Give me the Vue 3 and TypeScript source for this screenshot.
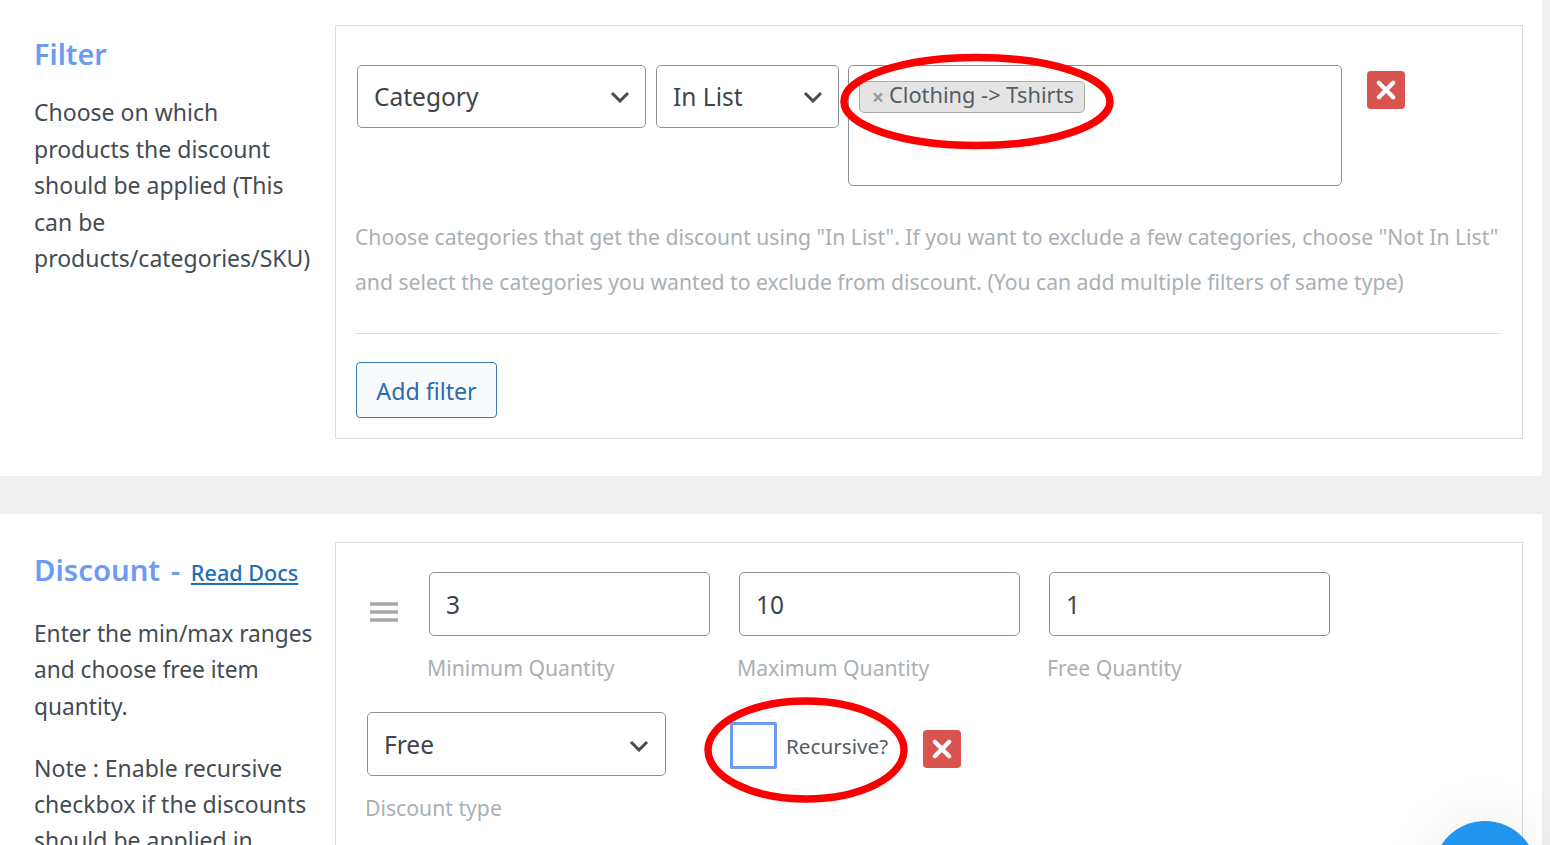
<script setup lang="ts">
const quantities = [
  { value: '3', label: 'Minimum Quantity' },
  { value: '10', label: 'Maximum Quantity' },
  { value: '1', label: 'Free Quantity' },
]
</script>

<template>
  <div class="page">
    <section class="panel filter-panel">
      <div class="intro">
        <h2>Filter</h2>
        <p>Choose on which products the discount should be applied (This can be products/categories/SKU)</p>
      </div>
      <div class="box filter-box">
        <div class="filter-row">
          <div class="select category"><span>Category</span><svg class="chev" viewBox="0 0 20 12"><path d="M2 2l8 8 8-8" /></svg></div>
          <div class="select inlist"><span>In List</span><svg class="chev" viewBox="0 0 20 12"><path d="M2 2l8 8 8-8" /></svg></div>
          <div class="multi">
            <span class="tag"><span class="tag-x">×</span>Clothing -&gt; Tshirts</span>
            <svg class="ring ring-tag" viewBox="0 0 274 96"><ellipse cx="137" cy="47.5" rx="133" ry="44" /></svg>
          </div>
          <button class="del del-top" type="button" aria-label="Remove"><svg viewBox="0 0 20 20"><path d="M4 4l12 12M16 4L4 16" /></svg></button>
        </div>
        <p class="hint">Choose categories that get the discount using "In List". If you want to exclude a few categories, choose "Not In List" and select the categories you wanted to exclude from discount. (You can add multiple filters of same type)</p>
        <hr />
        <button class="add" type="button">Add filter</button>
      </div>
    </section>

    <section class="panel discount-panel">
      <div class="intro">
        <h2>Discount <span class="dash">-</span> <a class="docs">Read Docs</a></h2>
        <p class="tight">Enter the min/max ranges and choose free item quantity.</p>
        <p class="tight note">Note : Enable recursive checkbox if the discounts should be applied in</p>
      </div>
      <div class="box discount-box">
        <div class="qty-row">
          <svg class="grip" viewBox="0 0 28 20"><path d="M0 2h28M0 10h28M0 18h28" /></svg>
          <div v-for="q in quantities" :key="q.label" class="field">
            <div class="input">{{ q.value }}</div>
            <div class="label">{{ q.label }}</div>
          </div>
        </div>
        <div class="type-row">
          <div class="field type-field">
            <div class="select free"><span>Free</span><svg class="chev" viewBox="0 0 20 12"><path d="M2 2l8 8 8-8" /></svg></div>
            <div class="label">Discount type</div>
          </div>
          <label class="recursive">
            <span class="check"></span>
            <span>Recursive?</span>
            <svg class="ring ring-rec" viewBox="0 0 204 106"><ellipse cx="102" cy="53" rx="98" ry="49" /></svg>
          </label>
          <button class="del del-bottom" type="button" aria-label="Remove"><svg viewBox="0 0 20 20"><path d="M4 4l12 12M16 4L4 16" /></svg></button>
        </div>
      </div>
    </section>
    <div class="bubble"></div>
  </div>
</template>

<style>
html, body { margin: 0; height: 845px; overflow: hidden; background: #f0f0f0; }
</style>

<style scoped>
.page {
  position: relative;
  width: 1550px;
  height: 845px;
  overflow: hidden;
  background: #f0f0f0;
  font-family: "Noto Sans", "Open Sans", sans-serif;
  color: #444b53;
}
.panel {
  width: 1542px;
  box-sizing: border-box;
  background: #fff;
  display: flex;
  align-items: flex-start;
  padding-left: 34px;
}
.filter-panel { height: 476px; padding-top: 25px; }
.discount-panel { height: 331px; margin-top: 38px; padding-top: 28px; }
.intro { width: 301px; flex: none; }
.intro h2 {
  margin: 0;
  font-size: 28.8px;
  line-height: 40px;
  font-weight: 600;
  color: #6d9bf2;
  white-space: nowrap;
}
.intro p {
  margin: 21px 0 0;
  width: 280px;
  font-size: 23px;
  line-height: 36.4px;
}
.filter-panel h2 { margin-top: 9px; }
.filter-panel .intro p { margin-top: 20.4px; width: 278px; }
.discount-panel h2 { margin-top: 7.5px; font-size: 29.3px; }
.intro p.tight { width: 290px; font-size: 22.7px; line-height: 36.4px; margin-top: 23.5px; }
.intro p.note { margin-top: 24.4px; font-size: 23px; line-height: 36.4px; }
.dash { margin: 0 3px; }
.docs {
  font-size: 21.6px;
  font-weight: 500;
  color: #1f6fb5;
  text-decoration: underline;
}
.box {
  width: 1188px;
  box-sizing: border-box;
  border: 1px solid #dcdcdc;
  background: #fff;
}
.filter-box { height: 414px; padding: 39px 20px 0 19px; }
.discount-box { height: 303px; padding: 29px 20px 0 31px; border-bottom: 0; }
.filter-row { display: flex; align-items: flex-start; margin-left: 2px; }
.select, .input, .multi {
  box-sizing: border-box;
  border: 1px solid #8a9199;
  border-radius: 5px;
  background: #fff;
  color: #3e444b;
  font-size: 24.5px;
}
.select {
  display: flex;
  align-items: center;
  justify-content: space-between;
  padding: 0 15px 0 16px;
}
.select span { margin-top: -1px; }
.category { width: 289px; height: 63px; }
.inlist { width: 183px; height: 63px; margin-left: 10px; }
.multi { position: relative; width: 494px; height: 121px; margin-left: 9px; }
.tag {
  position: absolute;
  left: 10px;
  top: 15px;
  box-sizing: border-box;
  height: 32px;
  width: 226px;
  display: flex;
  align-items: center;
  padding: 0 0 5px 12px;
  background: #e4e4e4;
  border: 1px solid #aaa;
  border-radius: 5px;
  font-size: 21.8px;
  color: #555c63;
  white-space: nowrap;
}
.tag-x { color: #999; font-weight: 700; margin: 4px 5px 0 0; font-size: 21px; }
.ring { position: absolute; pointer-events: none; overflow: visible; }
.ring ellipse { fill: none; stroke: #fb0000; stroke-width: 7.5; }
.ring-tag { left: -9px; top: -12px; width: 274px; height: 96px; }
.chev { width: 20px; height: 12px; flex: none; }
.chev path { fill: none; stroke: #444b53; stroke-width: 3; }
.del {
  padding: 0;
  border: 0;
  border-radius: 4px;
  background: #d9534f;
  width: 38px;
  height: 38px;
  display: flex;
  align-items: center;
  justify-content: center;
}
.del svg { width: 24px; height: 24px; }
.del path { fill: none; stroke: #fff; stroke-width: 3.6; stroke-linecap: round; }
.del-top { margin: 6px 0 0 25px; }
.hint {
  margin: 28px 0 0;
  font-size: 21.15px;
  line-height: 45px;
  color: #aab0b5;
  width: 1150px;
}
hr {
  border: 0;
  border-top: 1px solid #e1e1e1;
  margin: 29px 0 28px;
}
.add {
  display: block;
  width: 141px;
  height: 56px;
  margin-left: 1px;
  box-sizing: border-box;
  padding: 1px 0 0;
  border: 1px solid #3b7cb2;
  border-radius: 4px;
  background: #f8fbfd;
  color: #2b6ca8;
  font: 23.2px "Noto Sans", "Open Sans", sans-serif;
}
.qty-row { display: flex; align-items: flex-start; }
.grip { width: 28px; height: 20px; margin: 30px 31px 0 3px; flex: none; }
.grip path { stroke: #a8a8a8; stroke-width: 3.4; fill: none; }
.field { width: 281px; margin-right: 29px; flex: none; }
.input {
  height: 64px;
  display: flex;
  align-items: center;
  padding-left: 16px;
}
.label {
  margin: 17px 0 0 -2px;
  font-size: 21.2px;
  line-height: 30px;
  color: #aab0b5;
  white-space: nowrap;
}
.type-row { display: flex; align-items: flex-start; margin-top: 29px; }
.type-field { width: 299px; margin-right: 64px; }
.free { height: 64px; padding-right: 16px; }
.free span { margin-top: 1px; }
.free .chev { margin-top: 4px; }
.recursive {
  position: relative;
  display: flex;
  align-items: center;
  margin-top: 10px;
  color: #555c63;
  font-size: 20.7px;
  white-space: nowrap;
}
.check {
  box-sizing: border-box;
  width: 47px;
  height: 47px;
  border: 3px solid #6d9bf2;
  border-radius: 2px;
  margin-right: 9px;
}
.ring-rec { left: -26px; top: -25px; width: 204px; height: 106px; }
.del-bottom { margin: 18px 0 0 35px; }
.bubble {
  position: absolute;
  left: 1433px;
  top: 821px;
  width: 104px;
  height: 104px;
  border-radius: 50%;
  background: #2196ee;
  box-shadow: 0 0 60px rgba(0, 0, 0, 0.08);
}
</style>
